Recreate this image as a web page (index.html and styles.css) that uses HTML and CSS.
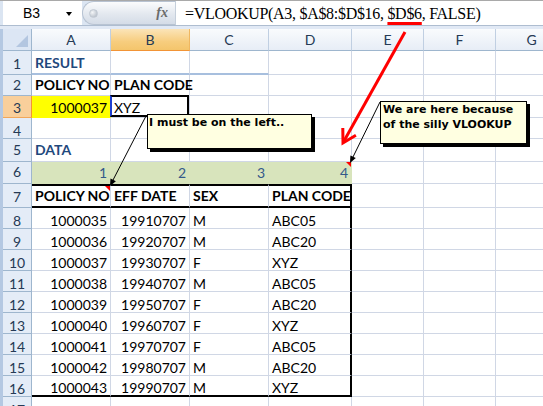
FILE: index.html
```html
<!DOCTYPE html>
<html>
<head>
<meta charset="utf-8">
<link rel="stylesheet" href="styles.css">
</head>
<body>
<div class="app">
  <div class="fbar">
    <div class="namebox"><span class="ref">B3</span><span class="drop"></span></div>
    <div class="pill"><span class="knob"></span><span class="fx">fx</span></div>
    <div class="formula">=VLOOKUP(A3, $A$8:$D$16, <span class="hl">$D$6</span>, FALSE)</div>
  </div>
  <div class="band"></div>
  <div class="sheet">
    <div class="row hdr"><div class="corner"></div><div class="ch">A</div><div class="ch on">B</div><div class="ch">C</div><div class="ch">D</div><div class="ch">E</div><div class="ch">F</div><div class="ch">G</div></div>
    <div class="row r1"><div class="rh">1</div><div class="c hd ul">RESULT</div><div class="c ul"></div><div class="c ul"></div><div class="c"></div><div class="c"></div><div class="c"></div><div class="c"></div></div>
    <div class="row r2"><div class="rh">2</div><div class="c b">POLICY NO</div><div class="c b">PLAN CODE</div><div class="c"></div><div class="c"></div><div class="c"></div><div class="c"></div><div class="c"></div></div>
    <div class="row r3"><div class="rh on">3</div><div class="c r yl">1000037</div><div class="c sel">XYZ</div><div class="c"></div><div class="c"></div><div class="c"></div><div class="c"></div><div class="c"></div></div>
    <div class="row r4"><div class="rh">4</div><div class="c"></div><div class="c"></div><div class="c"></div><div class="c"></div><div class="c"></div><div class="c"></div><div class="c"></div></div>
    <div class="row r5"><div class="rh">5</div><div class="c hd">DATA</div><div class="c"></div><div class="c"></div><div class="c"></div><div class="c"></div><div class="c"></div><div class="c"></div></div>
    <div class="row r6"><div class="rh">6</div><div class="c g r">1</div><div class="c g r">2</div><div class="c g r">3</div><div class="c g r">4</div><div class="c"></div><div class="c"></div><div class="c"></div></div>
    <div class="row r7"><div class="rh">7</div><div class="c t b">POLICY NO</div><div class="c t b">EFF DATE</div><div class="c t b">SEX</div><div class="c t te b">PLAN CODE</div><div class="c"></div><div class="c"></div><div class="c"></div></div>
    <div class="row"><div class="rh">8</div><div class="c t r">1000035</div><div class="c t r">19910707</div><div class="c t">M</div><div class="c t te">ABC05</div><div class="c"></div><div class="c"></div><div class="c"></div></div>
    <div class="row"><div class="rh">9</div><div class="c t r">1000036</div><div class="c t r">19920707</div><div class="c t">M</div><div class="c t te">ABC20</div><div class="c"></div><div class="c"></div><div class="c"></div></div>
    <div class="row"><div class="rh">10</div><div class="c t r">1000037</div><div class="c t r">19930707</div><div class="c t">F</div><div class="c t te">XYZ</div><div class="c"></div><div class="c"></div><div class="c"></div></div>
    <div class="row"><div class="rh">11</div><div class="c t r">1000038</div><div class="c t r">19940707</div><div class="c t">M</div><div class="c t te">ABC05</div><div class="c"></div><div class="c"></div><div class="c"></div></div>
    <div class="row"><div class="rh">12</div><div class="c t r">1000039</div><div class="c t r">19950707</div><div class="c t">F</div><div class="c t te">ABC20</div><div class="c"></div><div class="c"></div><div class="c"></div></div>
    <div class="row"><div class="rh">13</div><div class="c t r">1000040</div><div class="c t r">19960707</div><div class="c t">F</div><div class="c t te">XYZ</div><div class="c"></div><div class="c"></div><div class="c"></div></div>
    <div class="row"><div class="rh">14</div><div class="c t r">1000041</div><div class="c t r">19970707</div><div class="c t">F</div><div class="c t te">ABC05</div><div class="c"></div><div class="c"></div><div class="c"></div></div>
    <div class="row"><div class="rh">15</div><div class="c t r">1000042</div><div class="c t r">19980707</div><div class="c t">M</div><div class="c t te">ABC20</div><div class="c"></div><div class="c"></div><div class="c"></div></div>
    <div class="row r16"><div class="rh">16</div><div class="c t r">1000043</div><div class="c t r">19990707</div><div class="c t">M</div><div class="c t te">XYZ</div><div class="c"></div><div class="c"></div><div class="c"></div></div>
    <div class="row"><div class="rh">17</div><div class="c"></div><div class="c"></div><div class="c"></div><div class="c"></div><div class="c"></div><div class="c"></div><div class="c"></div></div>
  </div>

  <svg class="overlay" width="543" height="406" viewBox="0 0 543 406">
    <polygon points="105,186 110,186 110,191" fill="#ff0000"/>
    <polygon points="346,162 351,162 351,167" fill="#ff0000"/>
    <line x1="146" y1="116" x2="112" y2="182" stroke="#000" stroke-width="1"/>
    <polygon points="110,186 115.9,181.2 110.5,178.4" fill="#000"/>
    <line x1="380" y1="102" x2="352" y2="159" stroke="#000" stroke-width="1"/>
    <polygon points="350,163 355.8,158 350.4,155.4" fill="#000"/>
    <line x1="405" y1="32" x2="344" y2="141" stroke="#ff0000" stroke-width="3"/>
    <polyline points="342.8,128 343,143 355.9,135.3" fill="none" stroke="#ff0000" stroke-width="3" stroke-linejoin="miter"/>
  </svg>
  <div class="note n1">I must be on the left..</div>
  <div class="note n2">We are here because<br>of the silly VLOOKUP</div>
</div>
</body>
</html>
```

FILE: styles.css
```css
* { box-sizing: border-box; margin: 0; padding: 0; }
html, body { width: 543px; height: 406px; overflow: hidden; background: #fff; }
body { font-family: Lato, "Liberation Sans", sans-serif; font-size: 14px; color: #000; }

.app { position: relative; width: 543px; height: 406px; overflow: hidden; background: #fff; }

/* formula bar */
.fbar { display: flex; height: 25px; border-top: 1px solid #a9a9a9; background: #dbe5f2; padding-left: 3px; }
.namebox { width: 79px; background: #fff; display: flex; align-items: center; padding-left: 20px; font-family: "Liberation Sans", sans-serif; font-size: 14px; }
.ref { width: 43px; line-height: 16px; }
.drop { width: 0; height: 0; border-left: 3.5px solid transparent; border-right: 3.5px solid transparent; border-top: 4px solid #000; margin-top: 1px; }
.pill { width: 93px; display: flex; align-items: center; justify-content: space-between; padding: 0 7px 0 6px; border: 1px solid #b8c3d2; border-right: 0; border-radius: 12px 0 0 12px; background: linear-gradient(#fbfcfd, #e3e8ef 55%, #d4dce7); }
.knob { width: 9px; height: 9px; border-radius: 50%; background: radial-gradient(circle at 35% 35%, #f4f6f8, #aab3bf); border: 1px solid #c2c9d3; }
.fx { font-family: "Liberation Serif", serif; font-style: italic; font-weight: bold; font-size: 14px; color: #6b6b6b; }
.formula { flex: 1; background: #fff; border-left: 1px solid #c5cfdb; padding-left: 9px; font-family: "Liberation Serif", serif; font-size: 16px; letter-spacing: -0.3px; line-height: 25px; white-space: nowrap; }
.hl { text-decoration: underline; text-decoration-color: #ff0000; text-decoration-thickness: 3px; text-underline-offset: 3px; }
.band { height: 4px; border-top: 1px solid #aebdd0; background: #e1e9f5; }

/* sheet grid */
.sheet { display: grid; grid-template-columns: 29px 79px 79px 79px 83px 72px 72px 72px; grid-template-rows: 22px 24px 21px 22px 21px 23px 22px 24px repeat(9, 21px) 21px; border-left: 3px solid #b4c8e2; }
.row { display: contents; }

.corner { background: #dce6f4; border-right: 1px solid #9eb6ce; border-bottom: 1px solid #9eb6ce; position: relative; }
.corner::after { content: ""; position: absolute; right: 3px; bottom: 3px; width: 0; height: 0; border-left: 12px solid transparent; border-bottom: 12px solid #b3c6e0; }
.ch { display: flex; align-items: center; justify-content: center; line-height: 15px; color: #253a55; background: linear-gradient(#f9fbfd, #e7edf6); border-right: 1px solid #c0cfe2; border-bottom: 1px solid #9eb6ce; }
.ch.on { background: linear-gradient(#fbe4b8, #f7cd7e 60%, #f4c56c); border-bottom-color: #f29436; border-right-color: #f0b760; }

.rh { display: flex; align-items: flex-end; justify-content: center; line-height: 15px; color: #253a55; background: #e4ecf7; border-right: 1px solid #9eb6ce; border-bottom: 1px solid #9eb6ce; }
.rh.on { background: #f9cf9b; border-right-color: #f29436; border-bottom-color: #f1a75a; }

.c { display: flex; align-items: flex-end; line-height: 15px; padding: 0 3px; white-space: nowrap; border-right: 1px solid #d0d7e5; border-bottom: 1px solid #d0d7e5; }
.c.r { justify-content: flex-end; }
.b { font-weight: bold; }
.hd { font-weight: bold; color: #1f497d; }
.ul { border-bottom: 2px solid #a7bfde; }
.yl { background: #ffff00; border-right-color: #ffff00; border-bottom-color: #ffff00; }
.sel { position: relative; }
.sel::after { content: ""; position: absolute; left: -1px; top: -1px; right: 0; bottom: 0; border: 2px solid #000; border-left-color: #1d3fd1; }
.g { background: #d8e4bc; border-right-color: #d8e4bc; border-bottom: 0; color: #34598a; }
.te { border-right: 2px solid #000; }

.r1 > * { padding-bottom: 3px; }
.r2 > * { padding-bottom: 3px; }
.r3 > * { padding-bottom: 2px; }
.r5 > * { padding-bottom: 4px; }
.r6 > * { padding-bottom: 4px; }
.r7 > * { padding-bottom: 3px; }
.r7 > .t { border-top: 2px solid #000; border-bottom: 2px solid #000; }
.r16 > .t { border-bottom: 2px solid #000; }

/* overlays */
.overlay { position: absolute; left: 0; top: 0; pointer-events: none; }
.note { position: absolute; background: #ffffe1; border: 1px solid #000; box-shadow: 3px 3px 0 #000; font-family: "DejaVu Sans", sans-serif; font-weight: bold; font-size: 11px; line-height: 15px; padding: 0 1px 0 1px; white-space: nowrap; color: #000; }
.n1 { left: 147px; top: 114px; width: 165px; height: 35px; }
.n2 { left: 380px; top: 101px; width: 147px; height: 43px; padding-left: 2px; }
```
